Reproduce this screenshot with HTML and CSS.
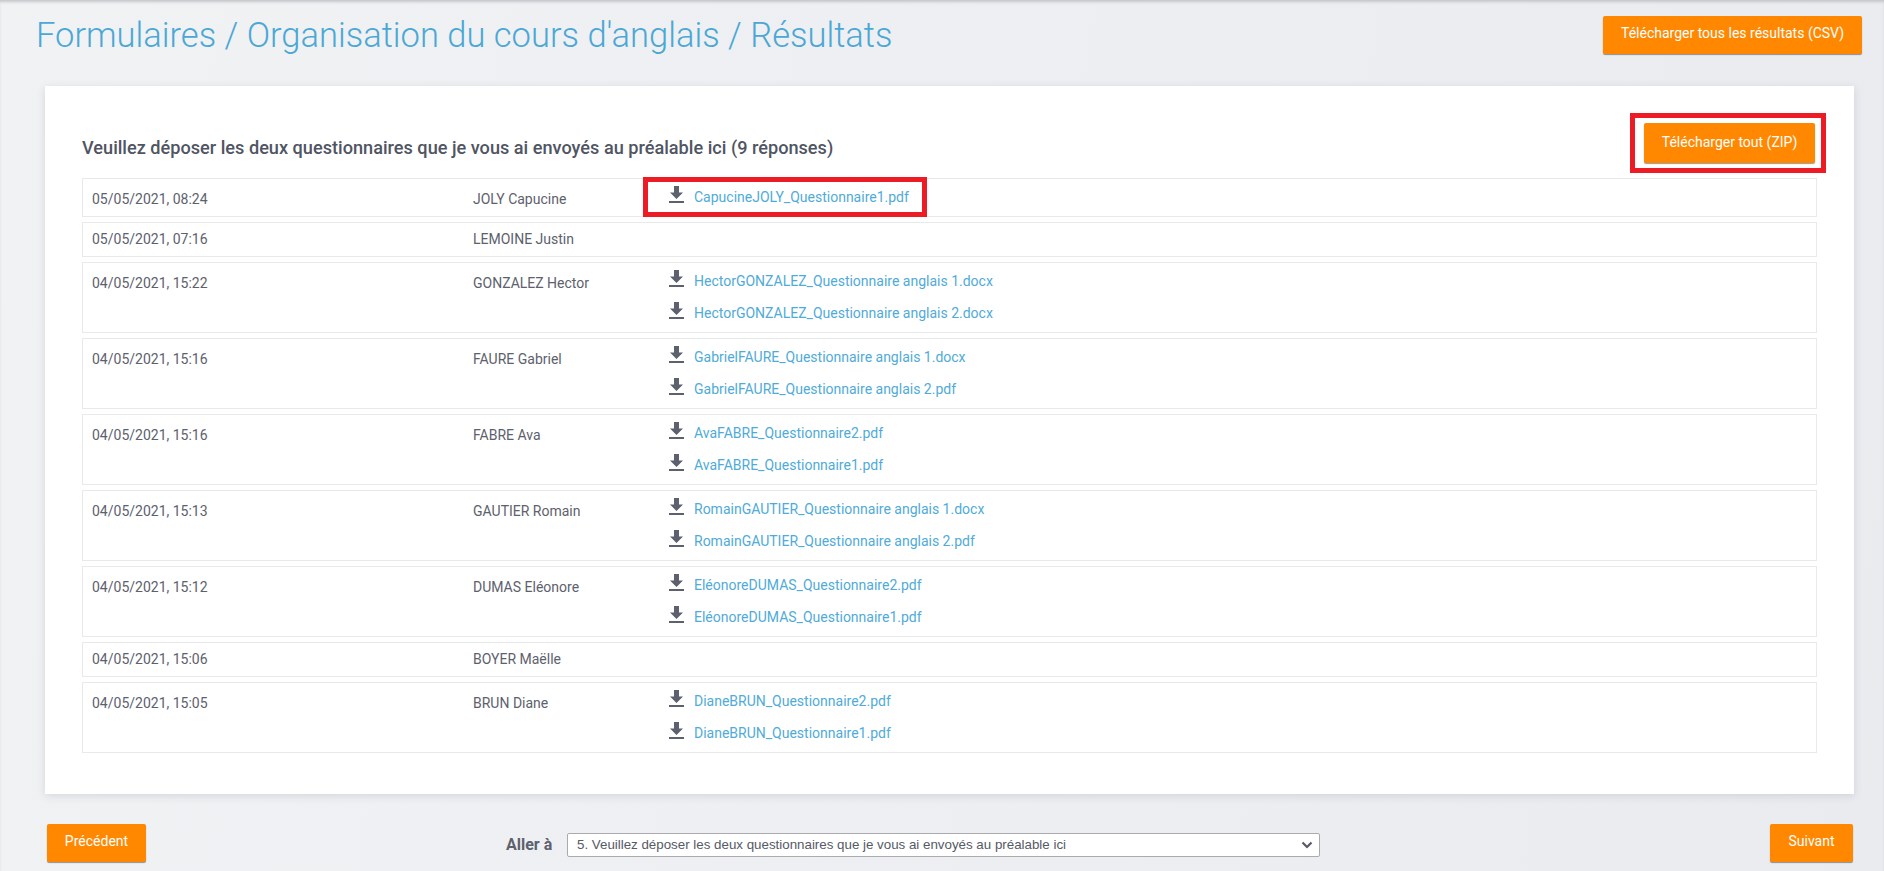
FILE: index.html
```html
<!DOCTYPE html>
<html lang="fr">
<head>
  <meta charset="UTF-8">
  <title>Résultats</title>
  <link rel="stylesheet" href="styles.css">
</head>
<body>

<svg class="icon-defs" width="0" height="0">
  <symbol id="dl" viewBox="0 0 15 17">
    <path d="M5 0h5v6.5h4l-6.5 6.5-6.5-6.5h4z"/>
    <rect x="0" y="15" width="15" height="2"/>
  </symbol>
</svg>

<header class="page-head">
  <h1>Formulaires / Organisation du cours d'anglais / Résultats</h1>
  <a class="btn btn-csv" href="#">Télécharger tous les résultats (CSV)</a>
</header>

<main class="card">
  <div class="card-head">
    <h2>Veuillez déposer les deux questionnaires que je vous ai envoyés au préalable ici (9 réponses)</h2>
    <div class="zip-mark marked">
      <a class="btn btn-zip" href="#">Télécharger tout (ZIP)</a>
    </div>
  </div>

  <div class="rows">
    <div class="row has-files">
      <div class="date">05/05/2021, 08:24</div>
      <div class="name">JOLY Capucine</div>
      <div class="files">
        <a class="file marked" href="#"><svg class="icon"><use href="#dl"/></svg>CapucineJOLY_Questionnaire1.pdf</a>
      </div>
    </div>
    <div class="row">
      <div class="date">05/05/2021, 07:16</div>
      <div class="name">LEMOINE Justin</div>
    </div>
    <div class="row has-files">
      <div class="date">04/05/2021, 15:22</div>
      <div class="name">GONZALEZ Hector</div>
      <div class="files">
        <a class="file" href="#"><svg class="icon"><use href="#dl"/></svg>HectorGONZALEZ_Questionnaire anglais 1.docx</a>
        <a class="file" href="#"><svg class="icon"><use href="#dl"/></svg>HectorGONZALEZ_Questionnaire anglais 2.docx</a>
      </div>
    </div>
    <div class="row has-files">
      <div class="date">04/05/2021, 15:16</div>
      <div class="name">FAURE Gabriel</div>
      <div class="files">
        <a class="file" href="#"><svg class="icon"><use href="#dl"/></svg>GabrielFAURE_Questionnaire anglais 1.docx</a>
        <a class="file" href="#"><svg class="icon"><use href="#dl"/></svg>GabrielFAURE_Questionnaire anglais 2.pdf</a>
      </div>
    </div>
    <div class="row has-files">
      <div class="date">04/05/2021, 15:16</div>
      <div class="name">FABRE Ava</div>
      <div class="files">
        <a class="file" href="#"><svg class="icon"><use href="#dl"/></svg>AvaFABRE_Questionnaire2.pdf</a>
        <a class="file" href="#"><svg class="icon"><use href="#dl"/></svg>AvaFABRE_Questionnaire1.pdf</a>
      </div>
    </div>
    <div class="row has-files">
      <div class="date">04/05/2021, 15:13</div>
      <div class="name">GAUTIER Romain</div>
      <div class="files">
        <a class="file" href="#"><svg class="icon"><use href="#dl"/></svg>RomainGAUTIER_Questionnaire anglais 1.docx</a>
        <a class="file" href="#"><svg class="icon"><use href="#dl"/></svg>RomainGAUTIER_Questionnaire anglais 2.pdf</a>
      </div>
    </div>
    <div class="row has-files">
      <div class="date">04/05/2021, 15:12</div>
      <div class="name">DUMAS Eléonore</div>
      <div class="files">
        <a class="file" href="#"><svg class="icon"><use href="#dl"/></svg>EléonoreDUMAS_Questionnaire2.pdf</a>
        <a class="file" href="#"><svg class="icon"><use href="#dl"/></svg>EléonoreDUMAS_Questionnaire1.pdf</a>
      </div>
    </div>
    <div class="row">
      <div class="date">04/05/2021, 15:06</div>
      <div class="name">BOYER Maëlle</div>
    </div>
    <div class="row has-files">
      <div class="date">04/05/2021, 15:05</div>
      <div class="name">BRUN Diane</div>
      <div class="files">
        <a class="file" href="#"><svg class="icon"><use href="#dl"/></svg>DianeBRUN_Questionnaire2.pdf</a>
        <a class="file" href="#"><svg class="icon"><use href="#dl"/></svg>DianeBRUN_Questionnaire1.pdf</a>
      </div>
    </div>
  </div>
</main>

<footer class="page-foot">
  <a class="btn btn-nav" href="#">Précédent</a>
  <div class="goto">
    <label for="goto-select">Aller à</label>
    <select id="goto-select">
      <option>5. Veuillez déposer les deux questionnaires que je vous ai envoyés au préalable ici</option>
    </select>
  </div>
  <a class="btn btn-nav btn-next" href="#">Suivant</a>
</footer>

</body>
</html>
```

FILE: styles.css
```css
html, body {
  height: 100%;
}

body {
  margin: 0;
  font-family: Roboto, Arial, sans-serif;
  font-size: 14px;
  color: #5d616d;
  background: linear-gradient(100deg, #f1f2f4, #e9ebef);
  box-shadow: inset 0 3px 3px -1px #c4c6ca;
  overflow: hidden;
}

.icon-defs {
  position: absolute;
}

.page-head {
  display: flex;
  justify-content: space-between;
  align-items: flex-start;
  height: 86px;
  padding: 16px 22px 0 36px;
  box-sizing: border-box;
}

h1 {
  margin: 0;
  font-size: 34.5px;
  line-height: 38px;
  font-weight: 300;
  color: #4ba8d5;
}

.btn {
  display: block;
  box-sizing: border-box;
  background-color: #ff8800;
  color: #fff;
  font-size: 14px;
  line-height: 17px;
  text-align: center;
  text-decoration: none;
  border-radius: 2px;
  box-shadow: 0 1px 1px rgba(0, 0, 0, 0.4);
}

.btn-csv {
  width: 259px;
  height: 38px;
  padding-top: 9px;
}

.btn-zip {
  width: 171px;
  height: 40px;
  padding-top: 11px;
}

.btn-nav {
  height: 38px;
  padding-top: 9px;
}

.marked {
  outline: 5px solid #ed1c24;
}

.card {
  margin: 0 30px 0 45px;
  padding: 37px 37px 41px;
  background: #fff;
  box-shadow: 0 2px 8px rgba(60, 65, 80, 0.15);
}

.card-head {
  display: flex;
  justify-content: space-between;
  margin-bottom: 15px;
  padding-right: 2px;
}

.zip-mark {
  margin: -5px -6px -5px 0;
  padding: 5px 6px 5px 9px;
}

h2 {
  margin: 15px 0 0;
  font-size: 18.15px;
  line-height: 20px;
  font-weight: 500;
  color: #505563;
}

.rows {
  display: flex;
  flex-direction: column;
  gap: 5px;
}

.row {
  display: flex;
  border: 1px solid #e8e9eb;
  padding-left: 9px;
}

.date {
  width: 381px;
  padding: 8px 0;
  line-height: 17px;
}

.name {
  width: 196px;
  padding: 8px 0;
  line-height: 17px;
}

.has-files {
  padding-top: 2px;
  padding-bottom: 3px;
}

.has-files .date,
.has-files .name {
  padding: 10px 0 0;
}

.files {
  display: flex;
  flex-direction: column;
  align-items: flex-start;
}

.file {
  display: flex;
  align-items: center;
  height: 32px;
  color: #4fabd9;
  text-decoration: none;
  line-height: 17px;
}

.file.marked {
  height: 30px;
  margin: 1px 0 1px -21px;
  padding: 0 13px 0 21px;
}

.icon {
  width: 15px;
  height: 17px;
  margin-right: 10px;
  margin-top: -5px;
  fill: #5d616d;
}

.page-foot {
  display: flex;
  align-items: flex-start;
  margin-top: 30px;
  padding: 0 31px 0 47px;
}

.page-foot .btn-nav:first-child {
  width: 99px;
}

.goto {
  display: flex;
  align-items: center;
  margin-top: 9px;
  margin-left: 360px;
}

.goto label {
  width: 61px;
  margin-top: -2px;
  font-size: 16px;
  font-weight: 700;
}

.goto select {
  appearance: none;
  width: 753px;
  height: 24px;
  padding: 0 0 2px 9px;
  font-family: "Liberation Sans", Arial, sans-serif;
  font-size: 13.33px;
  color: #555a66;
  background: #fff url("data:image/svg+xml,%3Csvg xmlns='http://www.w3.org/2000/svg' width='12' height='8'%3E%3Cpath d='M1.5 1.5L6 6l4.5-4.5' fill='none' stroke='%23555a66' stroke-width='2.2'/%3E%3C/svg%3E") no-repeat right 6px center;
  border: 1px solid #a9abae;
  border-radius: 2px;
}

.btn-next {
  width: 83px;
  margin-left: auto;
}
```
